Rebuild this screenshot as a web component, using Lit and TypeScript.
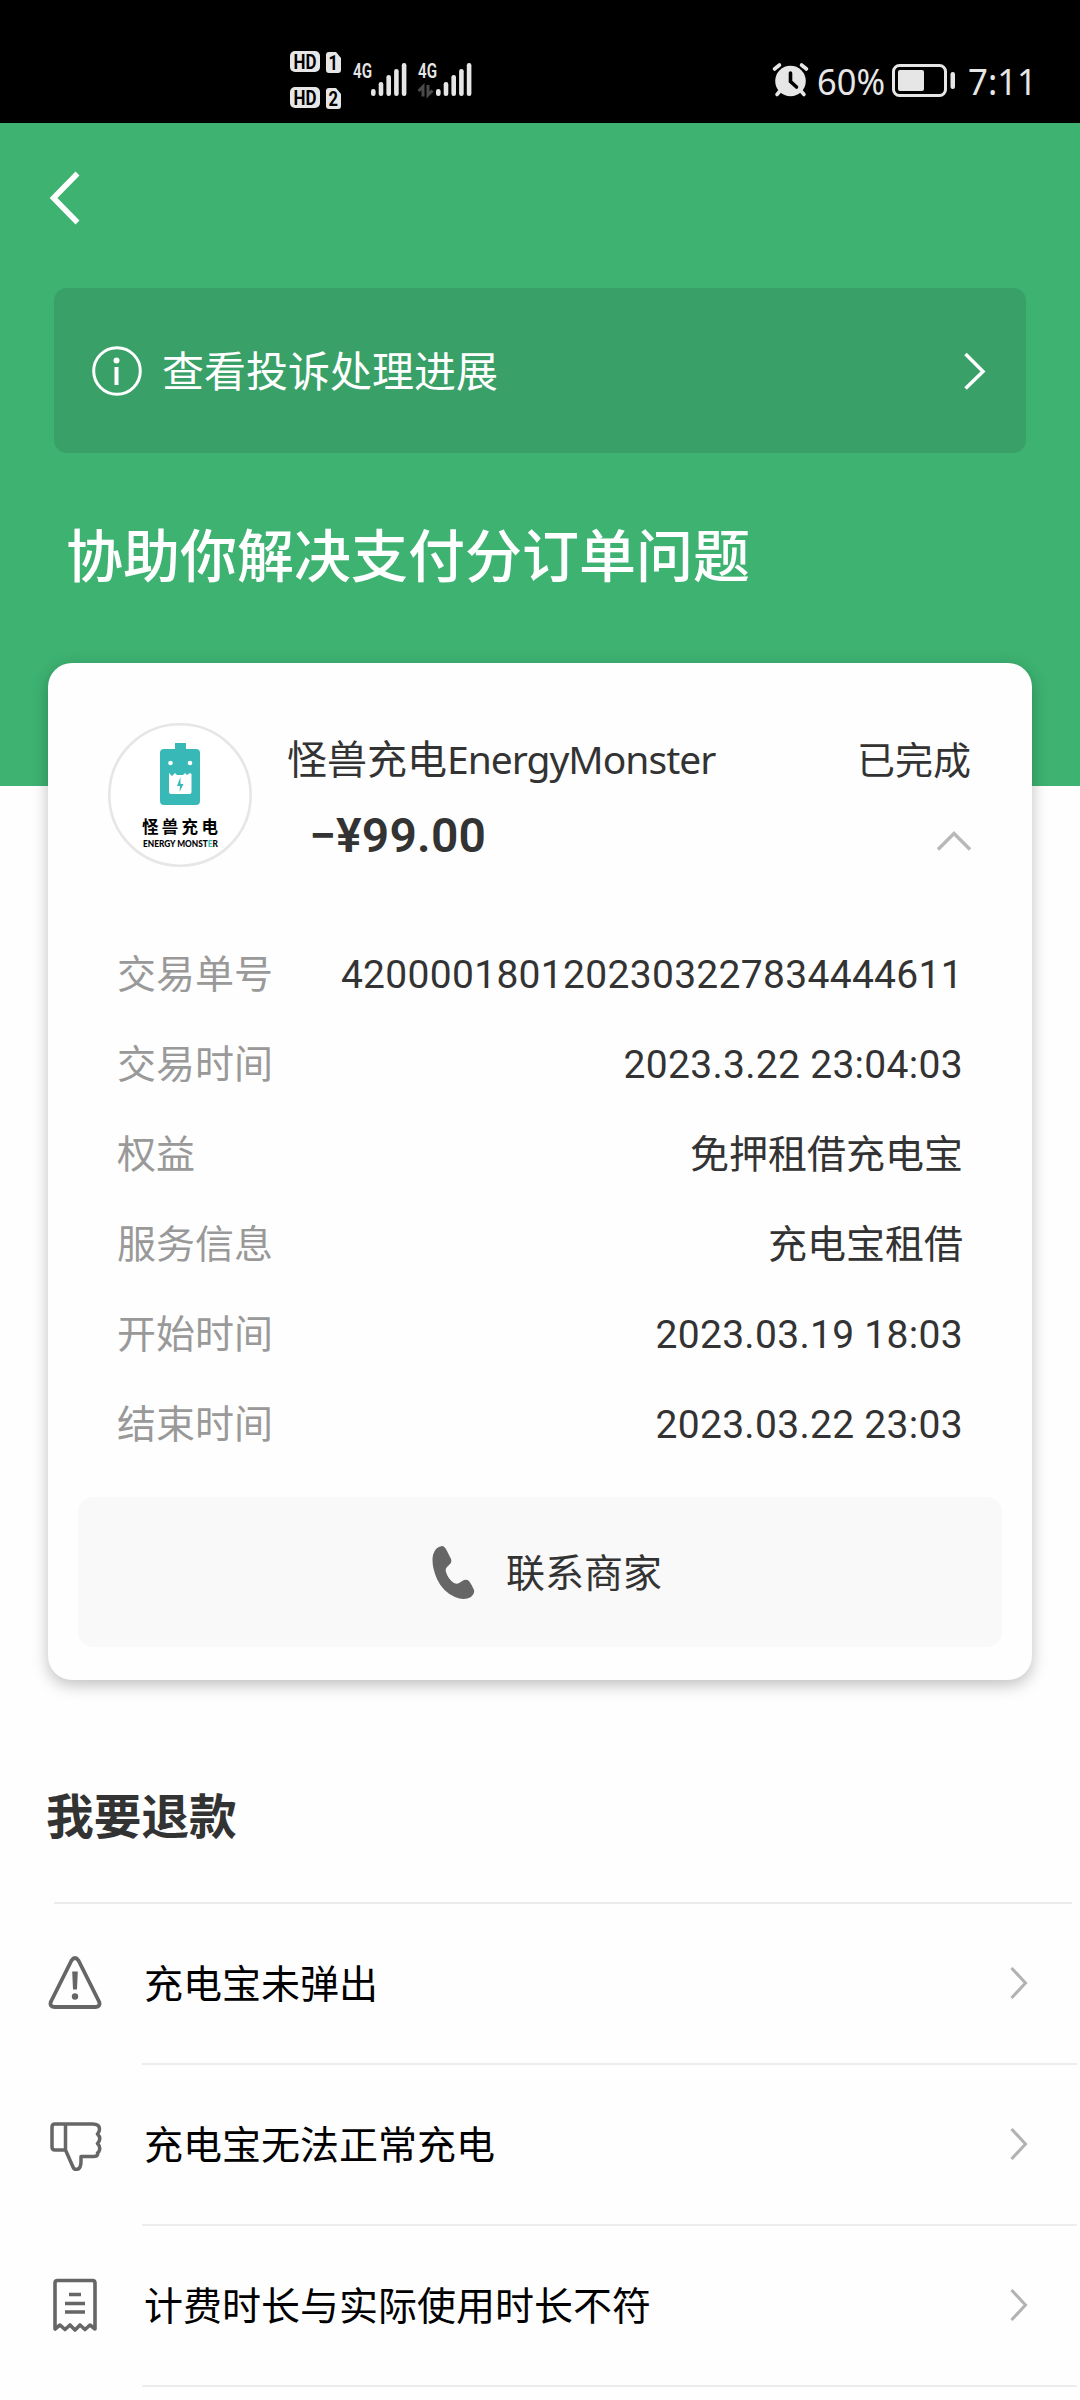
import { LitElement, html, css, svg, nothing } from "lit";
import { customElement, property } from "lit/decorators.js";

const details = [
  ["交易单号", "4200001801202303227834444611", "num"],
  ["交易时间", "2023.3.22 23:04:03", "num"],
  ["权益", "免押租借充电宝", "han"],
  ["服务信息", "充电宝租借", "han"],
  ["开始时间", "2023.03.19 18:03", "num"],
  ["结束时间", "2023.03.22 23:03", "num"],
];

const issues = [
  ["warning", "充电宝未弹出"],
  ["dislike", "充电宝无法正常充电"],
  ["receipt", "计费时长与实际使用时长不符"],
];

@customElement("status-bar")
class StatusBar extends LitElement {
  static styles = css`
    :host { display: block; height: 123px; background: #000; }
    .bar { display: block; width: 1080px; height: 123px; }
    text { font-family: Roboto, "Noto Sans CJK SC", sans-serif; fill: #e6e6e6; }
    .badge { font-size: 20px; font-weight: 700; fill: #000; }
    .net { font-size: 21px; font-weight: 600; }
    .big { font-family: "Noto Sans", sans-serif; font-size: 37px; }
  `;

  private signal(x: number) {
    return svg`${[7, 14, 21, 27, 33].map(
      (h, i) => svg`<rect x=${x + i * 7.7} y=${96 - h} width="4.6" height=${h} rx="2.2"></rect>`
    )}`;
  }

  private sim(y: number, n: string) {
    return svg`
      <rect x="290" y=${y} width="30" height="21" rx="5"></rect>
      <text class="badge" x="293.500" y=${y + 17.5} textLength="23" lengthAdjust="spacingAndGlyphs">HD</text>
      <path d="M329 ${y + 1}h7l5 6v12q0 3-3 3h-9q-3 0-3-3v-15q0-3 3-3z"></path>
      <text class="badge" x="328.500" y=${y + 18.5} textLength="9.500" lengthAdjust="spacingAndGlyphs">${n}</text>`;
  }

  render() {
    return html`<svg class="bar" viewBox="0 0 1080 123" fill="#e6e6e6">
      ${this.sim(51, "1")}${this.sim(87, "2")}
      <text class="net" x="353" y="78" textLength="19" lengthAdjust="spacingAndGlyphs">4G</text>
      ${this.signal(371)}
      <text class="net" x="418" y="78" textLength="19" lengthAdjust="spacingAndGlyphs">4G</text>
      <path d="M418.500 91l4.500-4.500v10M432.500 90.500l-4.500 4.500v-10" fill="none" stroke="#4a4a4a" stroke-width="3"></path>
      ${this.signal(436)}
      <circle cx="790.500" cy="81" r="15.300"></circle>
      <path d="M774.500 69l5-4M806.500 69l-5-4M780 91l-3 3.500M801 91l3 3.500" stroke="#e6e6e6" stroke-width="3.600" stroke-linecap="round"></path>
      <path d="M790.500 73v8.500l6 5.500" fill="none" stroke="#000" stroke-width="3.600" stroke-linecap="round"></path>
      <text class="big" x="817" y="95" textLength="68" lengthAdjust="spacingAndGlyphs">60%</text>
      <rect x="893.500" y="65.500" width="52" height="30" rx="6" fill="none" stroke="#e6e6e6" stroke-width="3"></rect>
      <rect x="898" y="70" width="26" height="21" rx="2"></rect>
      <rect x="950.500" y="72" width="4.500" height="17" rx="2.200"></rect>
      <text class="big" x="968" y="95" textLength="69" lengthAdjust="spacingAndGlyphs">7:11</text>
    </svg>`;
  }
}

@customElement("merchant-logo")
class MerchantLogo extends LitElement {
  static styles = css`
    :host { display: block; width: 144px; height: 144px; }
    .logo { display: block; }
    .han { font: 700 16.500px "Noto Sans CJK SC", sans-serif; }
    .latin { font: 900 8.800px Lato, sans-serif; }
    .accent { fill: #39b8b8; }
  `;
  render() {
    return html`<svg class="logo" width="144" height="144" viewBox="0 0 144 144">
      <circle cx="72" cy="72" r="70.700" fill="#fff" stroke="#e6e6e6" stroke-width="2.600"></circle>
      <path fill="#39b8b8" d="M67 20h11v6h10q4 0 4 4v48q0 4-4 4H56q-4 0-4-4V30q0-4 4-4h11z"></path>
      <circle cx="62.500" cy="40" r="2.300" fill="#fff"></circle>
      <circle cx="82" cy="40" r="2.300" fill="#fff"></circle>
      <path fill="#fff" d="M61 50l3 3 3-3 2 2h6l2-2 2 2 3-2 1.500 1v18q0 2-3 2H64q-3 0-3-2z"></path>
      <path fill="#39b8b8" d="M72.500 54l-3.500 9h3l-.5 6 4-8h-3z"></path>
      <text class="han" x="34" y="110" letter-spacing="3.300">怪兽充电</text>
      <text class="latin" x="35" y="124" textLength="75" lengthAdjust="spacingAndGlyphs">ENERGY MONST<tspan class="accent">E</tspan>R</text>
    </svg>`;
  }
}

@customElement("line-icon")
class LineIcon extends LitElement {
  @property() name = "";
  static styles = css`
    :host { display: block; flex: none; }
    svg { display: block; }
  `;
  render() {
    switch (this.name) {
      case "back":
        return html`<svg width="32" height="54" viewBox="0 0 32 54" fill="none" stroke="#fff" stroke-width="5.500"><path d="M29.500 2.500L5.500 27l24 24.500"></path></svg>`;
      case "info":
        return html`<svg width="50" height="50" viewBox="0 0 50 50" fill="none" stroke="#fff"><circle cx="25" cy="25" r="23.300" stroke-width="3"></circle><path d="M24.500 21v18" stroke-width="4"></path><circle cx="24.500" cy="14.500" r="3" fill="#fff" stroke="none"></circle></svg>`;
      case "next":
        return html`<svg width="24" height="38" viewBox="0 0 24 38" fill="none" stroke="#fff" stroke-width="3.500"><path d="M2.500 2L20 19.500 2.500 36.500"></path></svg>`;
      case "up":
        return html`<svg width="34" height="20" viewBox="0 0 34 20" fill="none" stroke="#b8b8b8" stroke-width="3.400"><path d="M1 18.500L17 2.500l16 16"></path></svg>`;
      case "more":
        return html`<svg width="18" height="34" viewBox="0 0 18 34" fill="none" stroke="#b2b2b2" stroke-width="3"><path d="M1.500 2L15.500 17 1.500 32"></path></svg>`;
      case "phone":
        return html`<svg width="44" height="54" viewBox="0 0 44 54" fill="#666"><path d="M10 1q2.500 0 5 5l4 8q1 3-1 5l-3 3q-2 2-1 5 2 7 8 11 3 1.500 5 0l5-3q3-1 5 1 3 4 5 9 1 4-3 7-7 4-16 0Q11 47 5 34-1 20 1 10 3 2 10 1z"></path></svg>`;
      case "warning":
        return html`<svg width="54" height="54" viewBox="0 0 54 54" fill="none" stroke="#666" stroke-width="3.800"><path d="M23.500 4.500q3.500-5 7 0l20.500 41q2 5-3.500 5.500H6.500Q1 50.500 3 45.500z" stroke-linejoin="round"></path><path d="M24.200 15.500h5.600l-.8 18h-4z" fill="#666" stroke="none"></path><circle cx="27" cy="40.500" r="3.200" fill="#666" stroke="none"></circle></svg>`;
      case "dislike":
        return html`<svg width="54" height="54" viewBox="0 0 54 54" fill="none" stroke="#666" stroke-width="3.500"><path d="M17.500 7h27q7 0 7 5 0 3-2 5 3 3 2 6-.5 2-2 3.500 3 3 2 6.500-.5 2-2 3 1 3.500-4 3.500H33v5q0 8-5 8-2 0-3-2.500L17.500 33H7q-3 0-3-3V10q0-3 3-3h10.500V33" stroke-linejoin="round"></path></svg>`;
      case "receipt":
        return html`<svg width="54" height="54" viewBox="0 0 54 54" fill="none" stroke="#666" stroke-width="3.600"><path d="M7 51V5q0-2.500 2.500-2.500h35Q47 2.500 47 5v46l-5-4-5 4.500-5-4.500-5 5-5-5-5 4.500-5-4.500z" stroke-linejoin="round"></path><path d="M21 16.500h12M17 25.500h20M17 34h20"></path></svg>`;
    }
    return nothing;
  }
}

@customElement("app-root")
class AppRoot extends LitElement {
  static styles = css`
    :host {
      display: block;
      width: 1080px;
      height: 2400px;
      overflow: hidden;
      background: #fefefe;
      color: #333;
      font-family: Roboto, "Noto Sans CJK SC", sans-serif;
      font-size: 39px;
      line-height: 60px;
    }
    * { box-sizing: border-box; }
    .han { font-family: "Noto Sans CJK SC", sans-serif; }
    .hero { height: 540px; padding: 48px 54px 0; background: #3db271; color: #fff; }
    .back { margin-left: -6px; height: 117px; }
    .notice {
      display: flex; align-items: center; height: 165px; border-radius: 13px;
      padding: 0 39px 0 38px; background: #39a067; font-size: 42px;
    }
    .notice .han { flex: 1; margin-left: 20px; padding-bottom: 4px; }
    .title { margin: 0; padding: 59px 0 0 12px; font-size: 57px; line-height: 80px; font-weight: 500; }
    .card {
      position: relative; height: 1017px; margin: 0 48px; padding: 60px 30px 0;
      background: #fefefe; border-radius: 24px; box-shadow: 0 5px 16px rgba(0, 0, 0, 0.25);
    }
    .stage { background: linear-gradient(#3db271 123px, #fefefe 123px); }
    .order { display: flex; height: 205px; padding: 0 31px 0 30px; }
    .summary { flex: 1; margin-left: 35px; padding-top: 4px; }
    .line { display: flex; align-items: center; justify-content: space-between; }
    .merchant { font-size: 40px; }
    .latin { font-family: "Noto Sans", sans-serif; font-size: 39px; letter-spacing: -1px; }
    .state { font-size: 38px; }
    .pay { height: 94px; padding-left: 22px; }
    .pay line-icon { padding-top: 9px; }
    .amount { font-size: 48px; font-weight: 600; letter-spacing: 0.200px; }
    .row { display: flex; justify-content: space-between; align-items: center; height: 90px; padding: 0 39px; }
    .row .han, .contact .han, .issue .han { padding-bottom: 4px; }
    .label { color: #999; }
    .value.num { letter-spacing: 0.300px; padding-top: 3px; }
    .contact {
      display: flex; align-items: center; justify-content: center; gap: 30px; height: 150px;
      margin-top: 29px; border-radius: 15px; background: #f9f9f9; padding-left: 14px;
    }
    .heading { margin: 0; padding: 99px 0 0 46px; height: 222px; font-size: 47.700px; line-height: 70px; font-weight: 700; }
    .rule { height: 2px; background: #ebebeb; margin: 0 8px 0 54px; }
    .issue { display: grid; grid-template-columns: 54px 1fr 18px; align-items: center; column-gap: 42px; height: 159px; padding: 0 52px 2px 48px; color: #000; }
    .sep { height: 2px; background: #ededed; margin: 0 3px 0 142px; }
  `;

  render() {
    return html`
      <status-bar></status-bar>
      <header class="hero">
        <line-icon class="back" name="back"></line-icon>
        <div class="notice">
          <line-icon name="info"></line-icon>
          <span class="han">查看投诉处理进展</span>
          <line-icon name="next"></line-icon>
        </div>
        <h1 class="title han">协助你解决支付分订单问题</h1>
      </header>
      <div class="stage">
        <section class="card">
          <div class="order">
            <merchant-logo></merchant-logo>
            <div class="summary">
              <div class="line">
                <span class="merchant han">怪兽充电<span class="latin">EnergyMonster</span></span>
                <span class="state han">已完成</span>
              </div>
              <div class="line pay">
                <span class="amount">−¥99.00</span>
                <line-icon name="up"></line-icon>
              </div>
            </div>
          </div>
          ${details.map(
            ([label, value, kind]) => html`<div class="row">
              <span class="label han">${label}</span><span class="value ${kind}">${value}</span>
            </div>`
          )}
          <div class="contact"><line-icon name="phone"></line-icon><span class="han">联系商家</span></div>
        </section>
      </div>
      <h2 class="heading han">我要退款</h2>
      <div class="rule"></div>
      ${issues.map(
        ([icon, text]) => html`<div class="issue">
            <line-icon name=${icon}></line-icon><span class="han">${text}</span><line-icon name="more"></line-icon>
          </div>
          <div class="sep"></div>`
      )}
    `;
  }
}
